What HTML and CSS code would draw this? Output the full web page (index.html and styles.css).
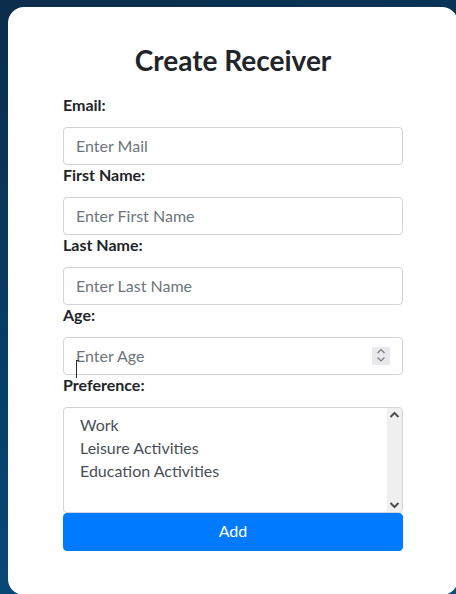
FILE: index.html
```html
<!DOCTYPE html>
<html lang="en">
<head>
<meta charset="utf-8">
<title>Create Receiver</title>
<link rel="stylesheet" href="styles.css">
</head>
<body>
<div class="card">
  <h2 class="title">Create Receiver</h2>
  <form class="form">
    <label class="label" for="email">Email:</label>
    <input class="control" id="email" type="email" placeholder="Enter Mail">
    <label class="label" for="first">First Name:</label>
    <input class="control" id="first" type="text" placeholder="Enter First Name">
    <label class="label" for="last">Last Name:</label>
    <input class="control" id="last" type="text" placeholder="Enter Last Name">
    <label class="label" for="age">Age:</label>
    <div class="age-field">
      <input class="control age" id="age" type="number" placeholder="Enter Age">
      <span class="spin"><svg width="18" height="18" viewBox="0 0 18 18"><path d="M5.5 6 L9 2.5 L12.5 6" fill="none" stroke="#77777c" stroke-width="1.2"/><path d="M5.5 10.5 L9 14 L12.5 10.5" fill="none" stroke="#77777c" stroke-width="1.2"/></svg></span>
      <span class="cursor"></span>
    </div>
    <label class="label" for="pref">Preference:</label>
    <div class="list-field">
      <select class="control list" id="pref" multiple>
        <option>Work</option>
        <option>Leisure Activities</option>
        <option>Education Activities</option>
      </select>
      <span class="scrollbar">
        <svg class="arrow" width="15" height="14" viewBox="0 0 15 14"><path d="M3.5 9 L7.5 5 L11.5 9" fill="none" stroke="#505050" stroke-width="2"/></svg>
        <svg class="arrow" width="15" height="14" viewBox="0 0 15 14"><path d="M3.5 5 L7.5 9 L11.5 5" fill="none" stroke="#505050" stroke-width="2"/></svg>
      </span>
    </div>
    <button class="btn" type="button">Add</button>
  </form>
</div>
</body>
</html>
```

FILE: styles.css
```css
html, body {
  margin: 0;
  padding: 0;
  height: 100%;
  overflow: hidden;
}
body {
  background: linear-gradient(160deg, #0c2c4a 0%, #063f68 50%, #08507f 100%);
  font-family: Lato, "Open Sans", sans-serif;
  color: #212529;
}
.card {
  margin: 7px 0 0 8px;
  width: 450px;
  height: 588px;
  box-sizing: border-box;
  background: #fff;
  border-radius: 16px;
  padding: 36px 55px 0 55px;
}
.title {
  margin: 0 0 18px 0;
  font-size: 28px;
  line-height: 34px;
  font-weight: 700;
  text-align: center;
  color: #212529;
}
.form {
  display: flex;
  flex-direction: column;
}
.label {
  display: block;
  font-size: 16px;
  line-height: 20px;
  font-weight: 700;
  margin-bottom: 12px;
  color: #212529;
}
.control {
  display: block;
  box-sizing: border-box;
  width: 100%;
  height: 38px;
  margin: 0;
  padding: 5px 12px 7px 12px;
  font-family: inherit;
  font-size: 16px;
  line-height: 24px;
  color: #495057;
  background: #fff;
  border: 1px solid #ced4da;
  border-radius: 4px;
  outline: none;
}
.control::placeholder {
  color: #6c757d;
  opacity: 1;
}
.age-field,
.list-field {
  position: relative;
}
.age {
  -moz-appearance: textfield;
}
.age::-webkit-outer-spin-button,
.age::-webkit-inner-spin-button {
  -webkit-appearance: none;
  margin: 0;
}
.spin {
  position: absolute;
  right: 13px;
  top: 10px;
  width: 18px;
  height: 18px;
  background: #e9e9ed;
  display: block;
}
.spin svg {
  display: block;
}
.cursor {
  position: absolute;
  left: 13px;
  top: 23px;
  width: 1px;
  height: 18px;
  background: #2a2a2a;
}
.cursor::before {
  content: "";
  position: absolute;
  left: 0;
  top: 0;
  width: 3px;
  height: 1px;
  background: #2a2a2a;
}
.list {
  height: 106px;
  padding: 5px 0 6px 12px;
  overflow: hidden;
}
.list option {
  padding: 2px 4px;
  font-size: 16px;
  color: #495057;
}
.scrollbar {
  position: absolute;
  top: 1px;
  right: 1px;
  bottom: 1px;
  width: 15px;
  background: #f0f0f0;
  display: flex;
  flex-direction: column;
  justify-content: space-between;
  border-top-right-radius: 3px;
  border-bottom-right-radius: 3px;
}
.arrow {
  display: block;
}
.btn {
  display: block;
  width: 100%;
  height: 38px;
  margin: 0;
  padding: 5px 12px 7px 12px;
  font-family: inherit;
  font-size: 16px;
  line-height: 24px;
  color: #fff;
  background: #007bff;
  border: 1px solid #007bff;
  border-radius: 4px;
}
```
